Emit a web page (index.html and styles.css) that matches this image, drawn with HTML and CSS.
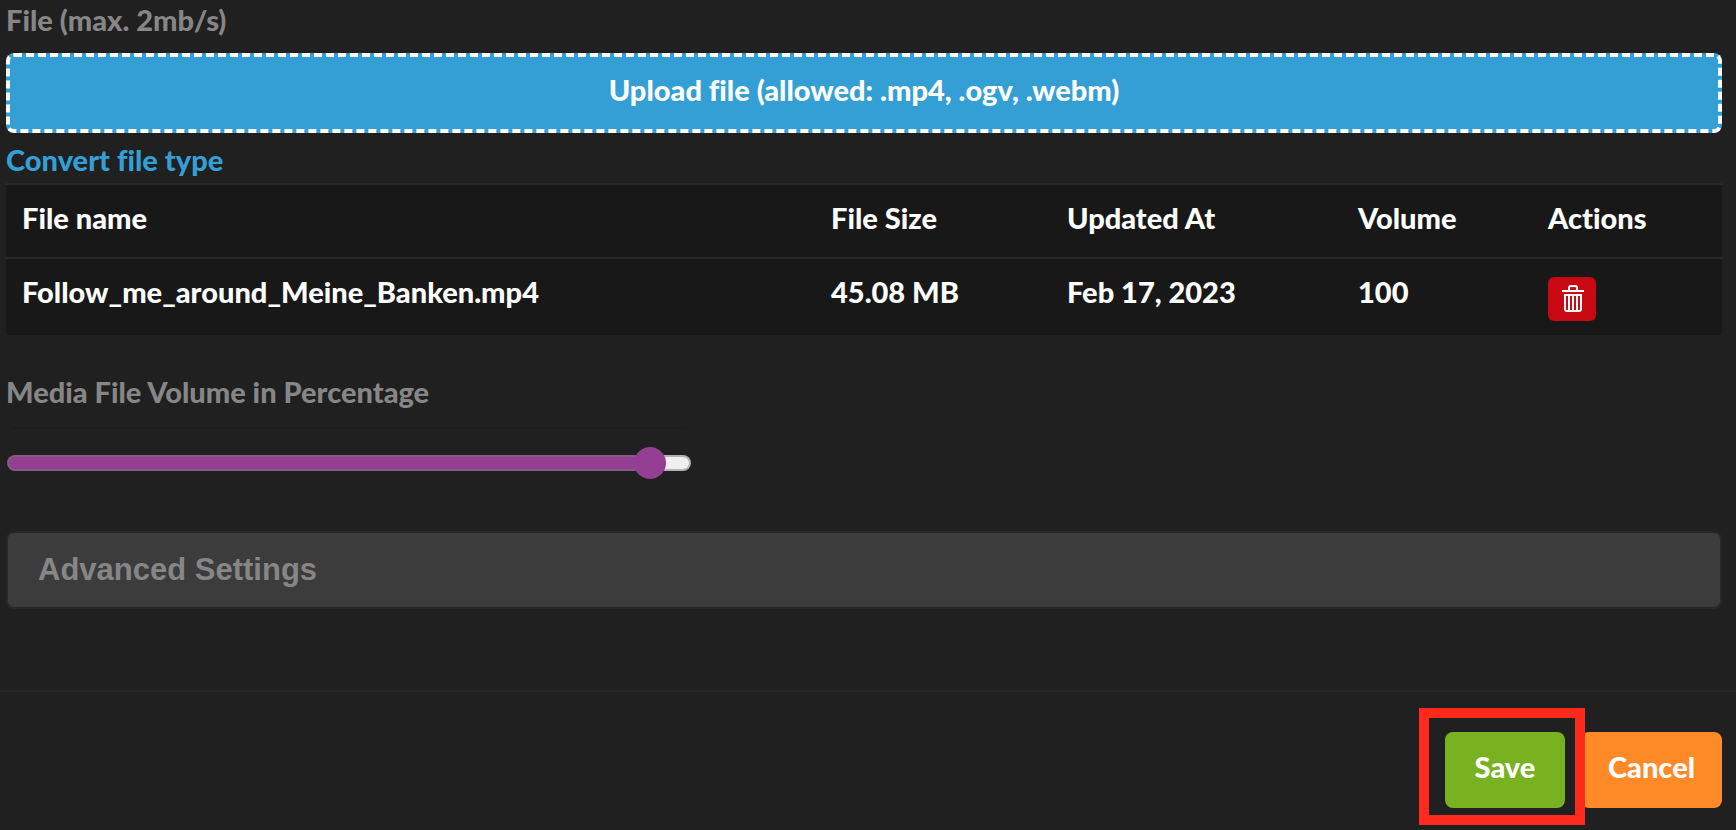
FILE: index.html
```
<!DOCTYPE html>
<html lang="en">

<head>
  <meta charset="UTF-8">
  <meta name="viewport" content="width=device-width, initial-scale=1.0">
  <title>Media File</title>
  <link rel="stylesheet" href="styles.css">
</head>

<body>
  <form class="media-form">
    <div class="content">
      <p class="label">File (max. 2mb/s)</p>
      <button type="button" class="upload">Upload file (allowed: .mp4, .ogv, .webm)</button>
      <a href="#" class="convert">Convert file type</a>

      <table class="files">
        <thead>
          <tr>
            <th>File name</th>
            <th class="size">File Size</th>
            <th class="updated">Updated At</th>
            <th class="volume">Volume</th>
            <th class="actions">Actions</th>
          </tr>
        </thead>
        <tbody>
          <tr>
            <td>Follow_me_around_Meine_Banken.mp4</td>
            <td>45.08 MB</td>
            <td>Feb 17, 2023</td>
            <td>100</td>
            <td>
              <button type="button" class="delete" aria-label="Delete">
                <svg width="22" height="28" viewBox="0 0 22 28" fill="none" stroke="#fff">
                  <path d="M0 6h22" stroke-width="2" />
                  <path d="M7 5V3q0-2 2-2h4q2 0 2 2v2" stroke-width="2" />
                  <path d="M3 10h16v14q0 2-2 2H5q-2 0-2-2z" stroke-width="2" />
                  <path d="M7 10v16M11 10v16M15 10v16" stroke-width="2" />
                </svg>
              </button>
            </td>
          </tr>
        </tbody>
      </table>

      <label class="label" for="volume">Media File Volume in Percentage</label>
      <div class="slider">
        <input type="range" id="volume" min="0" max="100" step="0.5" value="96.5">
      </div>

      <button type="button" class="advanced">Advanced Settings</button>
    </div>

    <div class="footer">
      <div class="highlight">
        <button type="submit" class="btn save">Save</button>
      </div>
      <button type="button" class="btn cancel">Cancel</button>
    </div>
  </form>
</body>

</html>
```
FILE: styles.css
```
* {
  box-sizing: border-box;
}

body {
  margin: 0;
  background: #202020;
  color: #fff;
  font-family: Lato, "Liberation Sans", sans-serif;
  font-size: 29px;
  font-weight: 900;
  line-height: 40px;
  font-variant-ligatures: none;
}

button {
  border: 0;
  color: inherit;
  font: inherit;
  cursor: pointer;
}

.content {
  padding: 0 14px 0 6px;
}

.label {
  display: block;
  margin: 0;
  color: #868686;
}

.upload {
  display: block;
  width: 100%;
  height: 80px;
  margin-top: 13px;
  padding: 0 0 6px;
  border: 4px dashed #fff;
  border-radius: 8px;
  background: #349fd4;
}

.convert {
  display: block;
  margin: 7px 0 3px;
  color: #349fd4;
  text-decoration: none;
}

/* file list */
.files {
  width: 100%;
  margin-bottom: 37px;
  border-collapse: collapse;
  table-layout: fixed;
  background: #181818;
}

.files th,
.files td {
  height: 74px;
  padding: 13px 16px 12px;
  border-top: 2px solid #282828;
  font-weight: 900;
  text-align: left;
  vertical-align: top;
}

.files td {
  height: 77px;
}

.size {
  width: 236px;
}

.updated {
  width: 291px;
}

.volume {
  width: 190px;
}

.actions {
  width: 190px;
}

.delete {
  display: flex;
  align-items: center;
  justify-content: center;
  width: 48px;
  height: 44px;
  margin-top: 5px;
  padding: 0 0 0 2px;
  border-radius: 6px;
  background: #c80813;
}

/* volume slider */
.slider {
  width: 684px;
  height: 104px;
  margin: 15px 0 0 1px;
  padding-top: 18px;
  border-top: 2px solid #1e1e1e;
  border-radius: 8px;
}

.slider input {
  display: block;
  width: 100%;
  height: 32px;
  margin: 0;
  appearance: none;
  background: none;
}

.slider input::-webkit-slider-runnable-track {
  height: 16px;
  border: 2px solid rgba(120, 120, 120, 0.5);
  border-radius: 8px;
  background: linear-gradient(to right, #943f93 95%, #efefef 95%);
  background-origin: border-box;
}

.slider input::-webkit-slider-thumb {
  width: 32px;
  height: 32px;
  margin-top: -10px;
  appearance: none;
  border-radius: 50%;
  background: #943f93;
}

.advanced {
  display: block;
  width: 100%;
  height: 78px;
  padding: 0 30px;
  border: 2px solid #282828;
  border-radius: 8px;
  background: #3c3c3c;
  color: #868686;
  font: bold 31px/40px "Liberation Sans", sans-serif;
  text-align: left;
}

/* bottom bar */
.footer {
  display: flex;
  justify-content: flex-end;
  align-items: flex-start;
  margin-top: 81px;
  padding: 16px 14px 3px;
  border-top: 2px solid #282828;
}

.highlight {
  z-index: 1;
  padding: 14px 10px 7px 16px;
  border: 10px solid #ff2a1c;
}

.btn {
  height: 76px;
  padding: 0 20px 6px;
  border-radius: 8px;
}

.save {
  display: block;
  width: 120px;
  background: #78b220;
}

.cancel {
  width: 141px;
  margin: 24px 0 0 -4px;
  background: #ff8a27;
}
```
